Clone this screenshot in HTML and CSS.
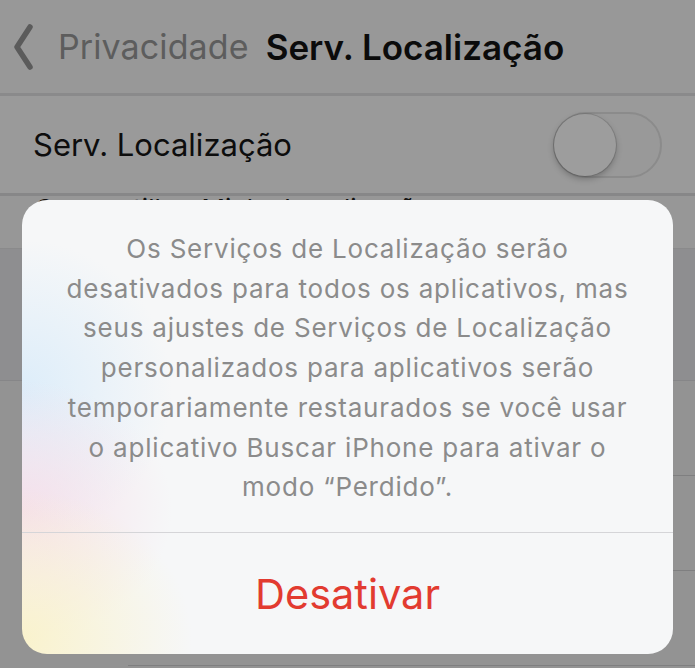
FILE: index.html
```html
<!DOCTYPE html>
<html lang="pt">
<head>
<meta charset="utf-8">
<title>Serv. Localização</title>
<link rel="stylesheet" href="styles.css">
</head>
<body>
<div class="screen">
  <header class="nav">
    <div class="back">
      <svg class="chev" width="22" height="46" viewBox="0 0 22 46"><path d="M17 3 L4 23 L17 43" fill="none" stroke="#5b5b5b" stroke-width="5.5" stroke-linecap="round" stroke-linejoin="round"/></svg>
      <span class="back-label">Privacidade</span>
    </div>
    <h1 class="title">Serv. Localização</h1>
  </header>
  <div class="row toggle-row">
    <span class="row-label">Serv. Localização</span>
    <span class="switch"><span class="knob"></span></span>
  </div>
  <div class="row share-row">
    <span class="share-label">Compartilhar Minha Localização</span>
  </div>
  <div class="gap"></div>
  <div class="app-row"></div>
  <div class="app-row"></div>
  <div class="app-row"></div>
  <div class="app-row"></div>

  <div class="alert">
    <p class="msg">Os Serviços de Localização serão<br>desativados para todos os aplicativos, mas<br>seus ajustes de Serviços de Localização<br>personalizados para aplicativos serão<br>temporariamente restaurados se você usar<br>o aplicativo Buscar iPhone para ativar o<br>modo “Perdido”.</p>
    <div class="action">Desativar</div>
  </div>
</div>
</body>
</html>
```
FILE: styles.css
```css
html, body { margin: 0; padding: 0; }
body { width: 695px; height: 668px; overflow: hidden; background: #939393; font-family: Inter, "Liberation Sans", sans-serif; }
.screen { position: relative; width: 695px; height: 668px; overflow: hidden; }
.nav { height: 93px; background: #989898; display: flex; align-items: center; border-bottom: 3px solid #8a8a8b; }
.back { display: flex; align-items: center; padding-left: 13px; }
.chev { display: block; }
.back-label { margin-left: 23px; font-size: 34px; color: #5d5d5d; letter-spacing: 0.1px; }
.title { margin: 0 0 0 17px; font-size: 35px; font-weight: 600; color: #0b0b0b; }
.row { display: flex; align-items: center; }
.toggle-row { height: 97px; background: #9a9a9a; border-bottom: 3px solid #878788; padding: 0 33px 0 33px; justify-content: space-between; }
.row-label { font-size: 31px; color: #0d0d0d; }
.switch { position: relative; width: 105px; height: 62px; border: 2px solid #8b8b8b; border-radius: 33px; background: #999; }
.knob { position: absolute; left: -1px; top: 0; width: 62px; height: 62px; border-radius: 50%; background: #9d9d9d; box-shadow: 0 3px 6px rgba(0,0,0,0.25), 0 0 0 1px rgba(0,0,0,0.12); }
.share-row { height: 52px; background: #979797; border-bottom: 1px solid #8a8a8b; padding-left: 35px; align-items: flex-start; overflow: hidden; }
.share-label { font-size: 26px; line-height: 26px; margin-top: 0; color: #111; }
.gap { height: 131px; background: #8e8e90; border-bottom: 1px solid #868688; }
.app-row { height: 94px; background: #939393; margin-left: 128px; border-bottom: 1px solid #7f7f80; }
.alert { position: absolute; left: 22px; top: 200px; width: 651px; height: 454px; border-radius: 25px; overflow: hidden; display: flex; flex-direction: column;
  background:
    radial-gradient(ellipse 170px 150px at 0 440px, rgba(250,242,200,0.9), rgba(250,242,200,0) 100%),
    radial-gradient(ellipse 150px 130px at 0 310px, rgba(246,220,232,0.85), rgba(246,220,232,0) 100%),
    radial-gradient(ellipse 150px 150px at 0 190px, rgba(218,236,250,0.9), rgba(218,236,250,0) 100%),
    #f6f7f8; }
.msg { margin: 0; padding: 29px 0 25px; text-align: center; font-size: 26px; line-height: 39.7px; letter-spacing: 0.8px; color: #8b8b8b; border-bottom: 1px solid #d5d5d8; }
.action { flex: 1; display: flex; align-items: center; justify-content: center; font-size: 41.5px; color: #e23b30; padding-top: 2px; }
```
